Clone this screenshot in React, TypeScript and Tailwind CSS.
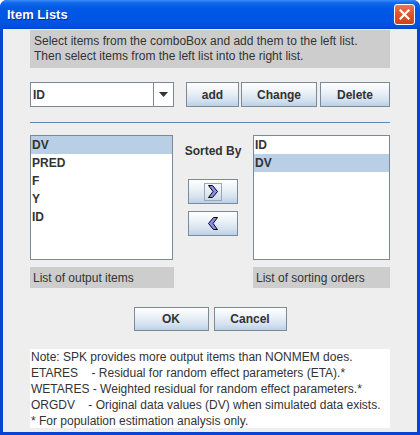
import { ReactNode } from "react";

function OceanButton({ w, h = 25, children, className = "" }: { w: string; h?: number; children: ReactNode; className?: string }) {
  return (
    <div
      className={`${w} ${h === 25 ? "h-[25px]" : "h-[24px]"} ${className} flex items-center justify-center border border-[#7a8a99] bg-[linear-gradient(to_bottom,#ffffff_0%,#eef3f9_35%,#d4e1ee_75%,#bcd0e6_100%)] font-bold text-[12px] text-[#333333]`}
    >
      {children}
    </div>
  );
}

function Chevron({ dir }: { dir: "right" | "left" }) {
  const pts =
    dir === "right"
      ? "0.5,0.5 4.5,0.5 9.5,6.5 4.5,12.5 0.5,12.5 5,6.5"
      : "9.5,0.5 5.5,0.5 0.5,6.5 5.5,12.5 9.5,12.5 5,6.5";
  return (
    <svg width="10" height="13" viewBox="0 0 10 13">
      <polygon points={pts} fill="#8c8cf2" stroke="#000000" strokeWidth="1" strokeLinejoin="miter" />
    </svg>
  );
}

export default function App() {
  const outputItems = ["DV", "PRED", "F", "Y", "ID"];
  const sortItems = ["ID", "DV"];

  return (
    <div className="w-[420px] h-[435px] bg-white font-['Liberation_Sans',Arial,sans-serif]">
      <div className="w-[420px] h-[435px] flex flex-col rounded-t-[7px] bg-[#0843d6] overflow-hidden">
        {/* Title bar */}
        <div className="h-[29px] flex items-center justify-between pl-[7px] pr-[5px] bg-[linear-gradient(to_bottom,#3a8cf6_0%,#1168ea_10%,#0058e6_30%,#0055e4_70%,#0050dc_90%,#0345cf_100%)]">
          <span className="text-white font-bold text-[13px] [text-shadow:1px_1px_0_#0a2a8a]">Item Lists</span>
          <div className="w-[21px] h-[21px] rounded-[3px] border border-white bg-[linear-gradient(to_bottom,#e8785a_0%,#e0542e_45%,#d0421c_100%)] flex items-center justify-center">
            <svg width="11" height="11" viewBox="0 0 11 11">
              <path d="M1.5 1.5 L9.5 9.5 M9.5 1.5 L1.5 9.5" stroke="#ffffff" strokeWidth="2.2" strokeLinecap="square" />
            </svg>
          </div>
        </div>

        {/* Content */}
        <div className="flex-1 mx-[3px] mb-[3px] bg-[#eeeeee] pl-[27px] pt-[1px] text-[12px] text-[#333333]">
          <div className="w-[360px] h-[38px] bg-[#cdcdcd] pl-[4px] pt-[4px] leading-[15px]">
            <div>Select items from the comboBox and add them to the left list.</div>
            <div>Then select items from the left list into the right list.</div>
          </div>

          <div className="mt-[14px] flex h-[25px]">
            <div className="w-[144px] h-[25px] flex border border-[#7a8a99] bg-white">
              <div className="flex-1 flex items-center pl-[2px] font-bold text-[12px] text-[#333333]">ID</div>
              <div className="w-[20px] border-l border-[#7a8a99] flex items-center justify-center">
                <svg width="9" height="5" viewBox="0 0 9 5">
                  <polygon points="0,0 9,0 4.5,5" fill="#333333" />
                </svg>
              </div>
            </div>
            <OceanButton w="w-[53px]" className="ml-[12px]">add</OceanButton>
            <OceanButton w="w-[76px]" className="ml-[2px]">Change</OceanButton>
            <OceanButton w="w-[70px]" className="ml-[3px]">Delete</OceanButton>
          </div>

          <div className="mt-[15px] h-px w-[360px] bg-[#6382bf]" />

          <div className="mt-[12px] flex">
            <div className="w-[143px] h-[125px] border border-[#7a8a99] bg-white">
              {outputItems.map((it, i) => (
                <div
                  key={it}
                  className={`h-[18px] flex items-center pl-[1px] font-bold ${i === 0 ? "bg-[#b8cfe5]" : ""}`}
                >
                  {it}
                </div>
              ))}
            </div>
            <div className="w-[80px] flex flex-col items-center">
              <div className="pt-[9px] leading-[15px] font-bold">Sorted By</div>
              <OceanButton w="w-[50px]" className="mt-[20px]">
                <div className="w-[18px] h-[18px] border border-[#9aa6b8] flex items-center justify-center">
                  <Chevron dir="right" />
                </div>
              </OceanButton>
              <OceanButton w="w-[50px]" className="mt-[7px]">
                <Chevron dir="left" />
              </OceanButton>
            </div>
            <div className="w-[137px] h-[125px] border border-[#7a8a99] bg-white">
              {sortItems.map((it, i) => (
                <div
                  key={it}
                  className={`h-[18px] flex items-center pl-[1px] font-bold ${i === 1 ? "bg-[#b8cfe5]" : ""}`}
                >
                  {it}
                </div>
              ))}
            </div>
          </div>

          <div className="mt-[7px] flex">
            <div className="w-[144px] h-[21px] bg-[#cdcdcd] flex items-center pl-[3px]">List of output items</div>
            <div className="w-[79px]" />
            <div className="w-[137px] h-[21px] bg-[#cdcdcd] flex items-center pl-[3px]">List of sorting orders</div>
          </div>

          <div className="mt-[19px] w-[360px] flex justify-center gap-[5px]">
            <OceanButton w="w-[75px]" h={24}>OK</OceanButton>
            <OceanButton w="w-[73px]" h={24}>Cancel</OceanButton>
          </div>

          <div className="mt-[18px] w-[360px] h-[79px] bg-white pl-[1px] leading-[16px] whitespace-pre">
            <div>Note: SPK provides more output items than NONMEM does.</div>
            <div>ETARES    - Residual for random effect parameters (ETA).*</div>
            <div>WETARES - Weighted residual for random effect parameters.*</div>
            <div>ORGDV    - Original data values (DV) when simulated data exists.</div>
            <div>* For population estimation analysis only.</div>
          </div>
        </div>
      </div>
    </div>
  );
}
